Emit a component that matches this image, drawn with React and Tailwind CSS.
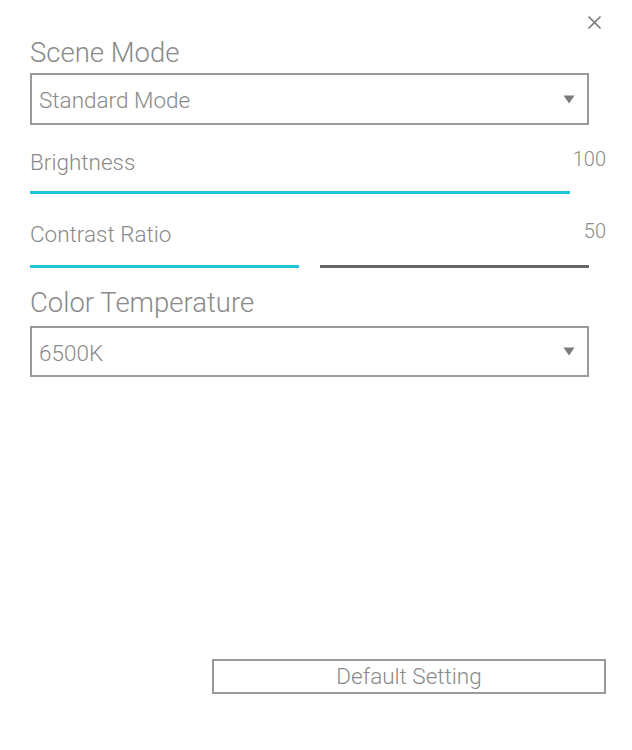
import { useState } from "react";

function Caret() {
  return (
    <svg width="12" height="9" viewBox="0 0 12 9" className="shrink-0">
      <polygon points="0.5,0.5 11.5,0.5 6,8.5" fill="#7a7a7a" />
    </svg>
  );
}

function Dropdown({ value, height }) {
  return (
    <div
      className={`w-[559px] ${height} border-2 border-[#9a9a9a] flex items-center justify-between pl-[7px] pr-[12px]`}
    >
      <span className="text-[22.5px] leading-[25px] pt-[3px] text-[#8a8a8a]">{value}</span>
      <Caret />
    </div>
  );
}

function SliderRow({ label, value }) {
  return (
    <div className="flex items-start justify-between w-[576px]">
      <span className="text-[22.5px] leading-[25px] text-[#8a8a8a]">{label}</span>
      <span className="text-[20px] leading-[24px] mt-[-3px] text-[#8a8a8a]">{value}</span>
    </div>
  );
}

export default function App() {
  const [scene] = useState("Standard Mode");
  const [temp] = useState("6500K");

  return (
    <div className="relative w-[632px] h-[750px] bg-white font-['Roboto',sans-serif] font-light flex flex-col pl-[30px]">
      <button className="absolute left-[587px] top-[15px] w-[15px] h-[15px]">
        <svg width="15" height="15" viewBox="0 0 15 15">
          <path d="M1.5 1.5 L13.5 13.5 M13.5 1.5 L1.5 13.5" stroke="#7a7a7a" strokeWidth="1.7" />
        </svg>
      </button>

      <div className="mt-[38px] text-[27.5px] leading-[30px] text-[#8a8a8a]">Scene Mode</div>
      <div className="mt-[5px]">
        <Dropdown value={scene} height="h-[52px]" />
      </div>

      <div className="mt-[25px]">
        <SliderRow label="Brightness" value="100" />
      </div>
      <div className="mt-[16px] w-[540px] h-[3px] bg-[#1cc6da]" />

      <div className="mt-[28px]">
        <SliderRow label="Contrast Ratio" value="50" />
      </div>
      <div className="mt-[18px] flex gap-[21px]">
        <div className="w-[269px] h-[3px] bg-[#1cc6da]" />
        <div className="w-[269px] h-[3px] bg-[#666666]" />
      </div>

      <div className="mt-[20px] text-[27.5px] leading-[30px] text-[#8a8a8a]">Color Temperature</div>
      <div className="mt-[8px]">
        <Dropdown value={temp} height="h-[51px]" />
      </div>

      <div className="flex-1" />

      <button className="self-end mr-[26px] mb-[56px] w-[394px] h-[35px] border-2 border-[#9a9a9a] text-[22.5px] leading-[25px] text-[#8a8a8a]">
        Default Setting
      </button>
    </div>
  );
}
